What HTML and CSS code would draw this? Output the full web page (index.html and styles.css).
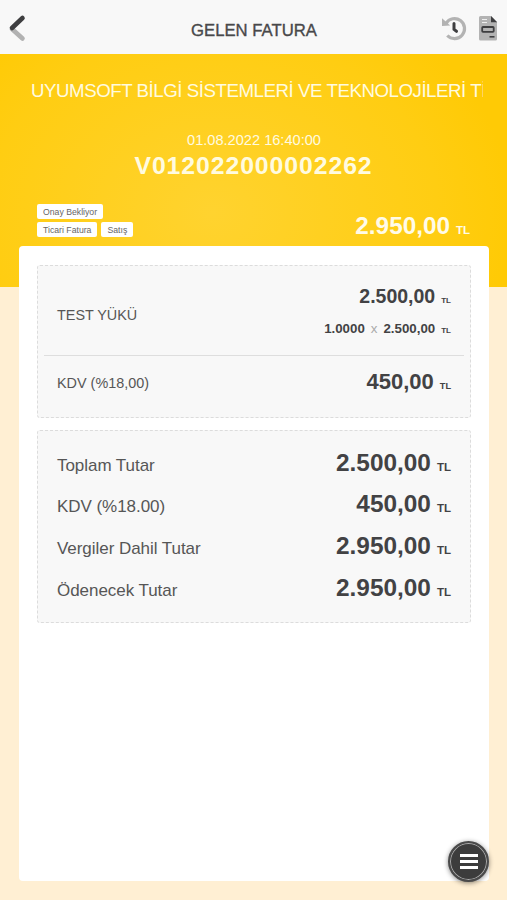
FILE: index.html
```html
<!DOCTYPE html>
<html lang="tr">
<head>
<meta charset="utf-8">
<meta name="viewport" content="width=device-width, initial-scale=1">
<title>Gelen Fatura</title>
<link rel="stylesheet" href="styles.css">
</head>
<body>
<header class="topbar">
  <svg class="back" viewBox="0 0 20 28" fill="none" stroke-linecap="round" stroke-width="4.6"><path stroke="#b2b2b2" d="M5 15 15.500 24.5"/><path stroke="#3e3e40" d="M5 14 15.500 4"/></svg>
  <h1 class="topbar-title">GELEN FATURA</h1>
  <div class="actions">
    <svg class="history" viewBox="0 0 26 26" fill="none"><path stroke="#b3b3b3" stroke-width="3.2" d="M5 7.400A10 10 0 1 1 6.3 19.5"/><path fill="#b3b3b3" d="M1 2.200 9.2 9.6 1 10z"/><path stroke="#3e3e40" stroke-width="3" stroke-linecap="round" stroke-linejoin="round" d="M13 7.600v5.8l2.5 1.9"/></svg>
    <svg class="document" viewBox="0 0 20 26"><path fill="#b3b3b3" d="M2.500 0H13l6 6v17a1.500 1.500 0 0 1-1.500 1.500H2.500A1.500 1.500 0 0 1 1 23V1.500A1.500 1.500 0 0 1 2.500 0z"/><path fill="#3e3e40" d="M13 0 19.200 6.200H13z"/><path stroke="#eee" d="M4 3.500h5M4 6.500h5"/><rect x="4.200" y="11" width="11.500" height="4.800" rx=".8" fill="#b3b3b3" stroke="#3e3e40" stroke-width="1.800"/><path stroke="#3e3e40" stroke-width="1.600" d="M11.500 20.800h5"/></svg>
  </div>
</header>
<main class="page">
  <section class="hero">
    <p class="company">UYUMSOFT BİLGİ SİSTEMLERİ VE TEKNOLOJİLERİ Tİ</p>
    <p class="date">01.08.2022 16:40:00</p>
    <p class="number">V012022000002262</p>
    <div class="summary">
      <div class="tags"><span class="tag">Onay Bekliyor</span><span class="tag">Ticari Fatura</span><span class="tag">Satış</span></div>
      <div class="amount hero-amount">2.950,00<small>TL</small></div>
    </div>
  </section>
  <section class="sheet">
    <div class="box items">
      <div class="item">
        <span>TEST YÜKÜ</span>
        <div class="item-values">
          <div class="amount item-total">2.500,00<small>TL</small></div>
          <div class="amount item-unit">1.0000<i>x</i>2.500,00<small>TL</small></div>
        </div>
      </div>
      <div class="tax"><span>KDV (%18,00)</span><div class="amount tax-amount">450,00<small>TL</small></div></div>
    </div>
    <div class="box totals">
      <div class="total"><span>Toplam Tutar</span><div class="amount">2.500,00<small>TL</small></div></div>
      <div class="total"><span>KDV (%18.00)</span><div class="amount">450,00<small>TL</small></div></div>
      <div class="total"><span>Vergiler Dahil Tutar</span><div class="amount">2.950,00<small>TL</small></div></div>
      <div class="total"><span>Ödenecek Tutar</span><div class="amount">2.950,00<small>TL</small></div></div>
    </div>
  </section>
</main>
<button class="menu" aria-label="Menü"><svg viewBox="0 0 20 18"><path stroke="#fff" stroke-width="3.200" d="M1 2.500h18M1 8.500h18M1 14.500h18"/></svg></button>
</body>
</html>
```
FILE: styles.css
```css
* { box-sizing: border-box; }

body {
  margin: 0;
  height: 900px;
  overflow: hidden;
  background: #ffefd3;
  color: #565656;
  font-family: "Liberation Sans", Arial, sans-serif;
}

p, h1 { margin: 0; }

.topbar {
  display: grid;
  grid-template-columns: 1fr auto 1fr;
  align-items: center;
  height: 54px;
  padding: 3px 9px 0 7px;
  background: #f8f8f8;
}
.back { width: 20px; height: 28px; margin-bottom: 2px; }
.topbar-title {
  padding: 5px 0 0 3px;
  color: #48484a;
  font-size: 16.7px;
  font-weight: 400;
  line-height: 20px;
  -webkit-text-stroke: .35px #48484a;
}
.actions { display: flex; justify-content: flex-end; gap: 11px; }
.history { width: 26px; height: 26px; }
.document { width: 20px; height: 26px; }

.page { display: flex; flex-direction: column; height: 846px; padding-bottom: 19px; }

.hero {
  flex: none;
  height: 233px;
  padding: 24px 24px 0 31px;
  background: radial-gradient(ellipse 300px 240px at 42% 68%, #ffd32f, #ffcd12 75%, #ffca05);
  color: #fffbe0;
}
.company {
  overflow: hidden;
  height: 26px;
  font-size: 18.7px;
  line-height: 26px;
  letter-spacing: -.46px;
  white-space: nowrap;
}
.date { margin: 27px 0 0 -6px; font-size: 14.6px; line-height: 18px; text-align: center; }
.number {
  margin: 1px 0 0 -7px;
  font-size: 24.8px;
  font-weight: 700;
  line-height: 32px;
  letter-spacing: .92px;
  text-align: center;
}
.summary { display: flex; justify-content: space-between; margin: 22px 13px 0 6px; }
.tags { display: flex; flex-wrap: wrap; align-content: flex-start; gap: 3px 4px; width: 110px; }
.tag {
  height: 15px;
  padding: 0 6px;
  border-radius: 2px;
  background: #fff;
  color: #666;
  font-size: 8.7px;
  line-height: 16px;
}

.amount { color: #424244; font-weight: 700; white-space: nowrap; }
.amount small { margin-left: 6px; font-size: 11.5px; }
.hero-amount { padding-top: 8px; color: #fffbe9; font-size: 24.3px; line-height: 28px; }

.sheet {
  flex: 1;
  margin: -41px 18px 0 19px;
  padding: 19px 18px 0;
  border-radius: 4px;
  background: #fff;
}
.box { border: 1px dashed #dcdcdc; border-radius: 3px; background: #f8f8f8; }
.items { height: 153px; padding: 0 6px; }
.item {
  display: flex;
  align-items: center;
  justify-content: space-between;
  height: 90px;
  padding: 8px 13px 0 13px;
  border-bottom: 1px solid #dedede;
  font-size: 14.4px;
}
.item-values { display: flex; flex-direction: column; align-items: flex-end; padding-bottom: 5px; }
.item-total { font-size: 19.5px; line-height: 32px; }
.item-unit { font-size: 13.3px; line-height: 24px; padding-bottom: 1px; }
.item-unit i { margin: 0 6px; color: #aaa; font-style: normal; font-weight: 400; }
.item-total small, .item-unit small { font-size: 8px; }
.tax {
  display: flex;
  align-items: center;
  justify-content: space-between;
  height: 54px;
  padding: 0 13px;
  font-size: 14.4px;
}
.tax-amount { padding-bottom: 2px; font-size: 22px; }
.tax-amount small { font-size: 9.2px; }

.totals { height: 193px; margin-top: 12px; padding: 13px 19px 0; }
.total { display: flex; align-items: center; justify-content: space-between; height: 41.6px; font-size: 17px; }
.total span { padding-top: 2px; letter-spacing: -.05px; }
.total .amount { padding-bottom: 4px; font-size: 24.4px; }

.menu {
  position: absolute;
  right: 18px;
  bottom: 18px;
  display: grid;
  place-items: center;
  width: 41px;
  height: 41px;
  padding: 0;
  border: 2px solid #4a4a4a;
  border-radius: 50%;
  background: #3c3c3c;
  box-shadow: inset 0 0 0 1px #aaa, 0 1px 5px #0007;
}
.menu svg { width: 20px; height: 18px; }
```
